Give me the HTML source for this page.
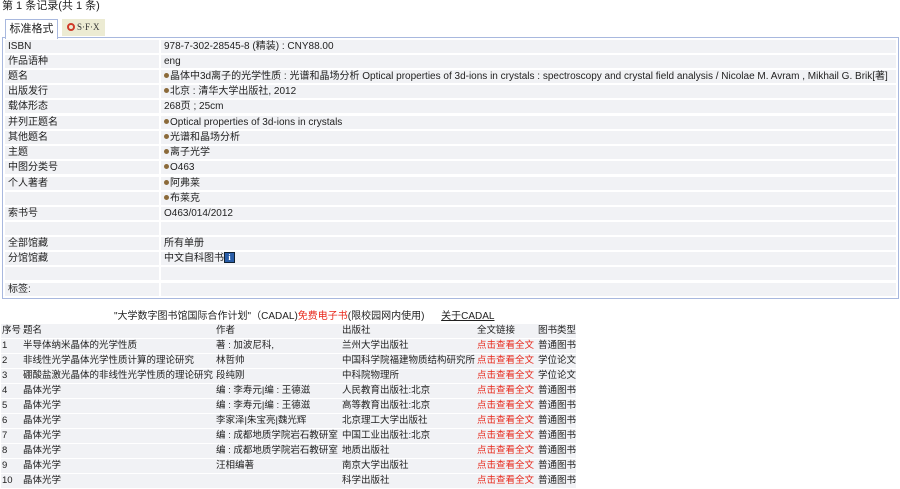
<!DOCTYPE html>
<html><head><meta charset="utf-8"><style>
body{margin:0;background:#fff;font-family:"Liberation Sans","Noto Sans CJK SC",sans-serif;font-size:10px;color:#222;width:900px;height:482px;overflow:hidden;position:relative}
.a{position:absolute;white-space:nowrap}
#box{position:absolute;left:2px;top:37px;width:895px;height:260px;border:1px solid #a8b8de;background:#fff;overflow:hidden}
.row{position:absolute;left:2px;right:2px;height:13px}
.row .l{position:absolute;left:0;width:154px;height:13px;background:#f1f2f5}
.row .v{position:absolute;left:156px;right:0;height:13px;background:#f1f2f5}
.row span{position:absolute;top:0;line-height:14px;white-space:nowrap}
.dot{display:inline-block;width:5px;height:5px;border-radius:50%;background:#8b6a3a;margin:0 1px 1px 0;vertical-align:middle}
table{position:absolute;left:1px;top:323px;border-collapse:separate;border-spacing:0 1px;font-size:9.5px;table-layout:fixed;width:575px}
td{background:#f1f2f5;height:14px;padding:0 0 0 1px;line-height:14px;white-space:nowrap;overflow:hidden}
.r{color:#e8291c}
</style></head><body>
<div class="a" style="left:2px;top:0;font-size:11px;line-height:13px">第 1 条记录(共 1 条)</div>
<div class="a" style="left:5px;top:19px;width:51px;height:19px;border:1px solid #a8b8de;border-bottom:none;background:#fff;z-index:2;text-align:center;line-height:19px;font-size:11px">标准格式</div>
<div class="a" style="left:62px;top:19px;width:43px;height:17px;background:#ecebd3;font-family:'Liberation Serif',serif;font-size:9px;line-height:17px;color:#333"><span style="display:inline-block;width:8px;height:8px;border-radius:50%;border:2px solid #d03a2a;box-sizing:border-box;margin:0 2px 0 5px;vertical-align:-1px"></span>S·F·X</div>
<div id="box">
<div class="row" style="top:2px"><div class="l"></div><div class="v"></div><span style="left:3px">ISBN</span><span style="left:159px">978-7-302-28545-8 (精装) : CNY88.00</span></div>
<div class="row" style="top:17px"><div class="l"></div><div class="v"></div><span style="left:3px">作品语种</span><span style="left:159px">eng</span></div>
<div class="row" style="top:32px"><div class="l"></div><div class="v"></div><span style="left:3px">题名</span><span style="left:159px"><i class="dot"></i>晶体中3d离子的光学性质 : 光谱和晶场分析 Optical properties of 3d-ions in crystals : spectroscopy and crystal field analysis / Nicolae M. Avram , Mikhail G. Brik[著]</span></div>
<div class="row" style="top:47px"><div class="l"></div><div class="v"></div><span style="left:3px">出版发行</span><span style="left:159px"><i class="dot"></i>北京 : 清华大学出版社, 2012</span></div>
<div class="row" style="top:62px"><div class="l"></div><div class="v"></div><span style="left:3px">载体形态</span><span style="left:159px">268页 ; 25cm</span></div>
<div class="row" style="top:78px"><div class="l"></div><div class="v"></div><span style="left:3px">并列正题名</span><span style="left:159px"><i class="dot"></i>Optical properties of 3d-ions in crystals</span></div>
<div class="row" style="top:93px"><div class="l"></div><div class="v"></div><span style="left:3px">其他题名</span><span style="left:159px"><i class="dot"></i>光谱和晶场分析</span></div>
<div class="row" style="top:108px"><div class="l"></div><div class="v"></div><span style="left:3px">主题</span><span style="left:159px"><i class="dot"></i>离子光学</span></div>
<div class="row" style="top:123px"><div class="l"></div><div class="v"></div><span style="left:3px">中图分类号</span><span style="left:159px"><i class="dot"></i>O463</span></div>
<div class="row" style="top:139px"><div class="l"></div><div class="v"></div><span style="left:3px">个人著者</span><span style="left:159px"><i class="dot"></i>阿弗莱</span></div>
<div class="row" style="top:154px"><div class="l"></div><div class="v"></div><span style="left:159px"><i class="dot"></i>布莱克</span></div>
<div class="row" style="top:169px"><div class="l"></div><div class="v"></div><span style="left:3px">索书号</span><span style="left:159px">O463/014/2012</span></div>
<div class="row" style="top:184px"><div class="l"></div><div class="v"></div></div>
<div class="row" style="top:199px"><div class="l"></div><div class="v"></div><span style="left:3px">全部馆藏</span><span style="left:159px">所有单册</span></div>
<div class="row" style="top:214px"><div class="l"></div><div class="v"></div><span style="left:3px">分馆馆藏</span><span style="left:159px">中文自科图书<b style="display:inline-block;width:9px;height:9px;background:#2a5ea8;color:#fff;font-size:8px;line-height:9px;text-align:center;font-family:'Liberation Serif',serif;border:1px solid #123;vertical-align:1px">i</b></span></div>
<div class="row" style="top:229px"><div class="l"></div><div class="v"></div></div>
<div class="row" style="top:245px"><div class="l"></div><div class="v"></div><span style="left:3px">标签:</span></div>
</div>
<div class="a" style="left:114px;top:310px;line-height:13px">"大学数字图书馆国际合作计划"（CADAL)<span class="r">免费电子书</span>(限校园网内使用)&nbsp;&nbsp;&nbsp;&nbsp;&nbsp;&nbsp;<u>关于CADAL</u></div>
<table>
<colgroup><col style="width:21px"><col style="width:193px"><col style="width:126px"><col style="width:135px"><col style="width:61px"><col style="width:39px"></colgroup>
<tr><td>序号</td><td>题名</td><td>作者</td><td>出版社</td><td>全文链接</td><td>图书类型</td></tr>
<tr><td>1</td><td>半导体纳米晶体的光学性质</td><td>著 : 加波尼科,</td><td>兰州大学出版社</td><td class="r">点击查看全文</td><td>普通图书</td></tr>
<tr><td>2</td><td>非线性光学晶体光学性质计算的理论研究</td><td>林哲帅</td><td>中国科学院福建物质结构研究所</td><td class="r">点击查看全文</td><td>学位论文</td></tr>
<tr><td>3</td><td>硼酸盐激光晶体的非线性光学性质的理论研究</td><td>段纯刚</td><td>中科院物理所</td><td class="r">点击查看全文</td><td>学位论文</td></tr>
<tr><td>4</td><td>晶体光学</td><td>编 : 李寿元|编 : 王德滋</td><td>人民教育出版社:北京</td><td class="r">点击查看全文</td><td>普通图书</td></tr>
<tr><td>5</td><td>晶体光学</td><td>编 : 李寿元|编 : 王德滋</td><td>高等教育出版社:北京</td><td class="r">点击查看全文</td><td>普通图书</td></tr>
<tr><td>6</td><td>晶体光学</td><td>李家泽|朱宝亮|魏光辉</td><td>北京理工大学出版社</td><td class="r">点击查看全文</td><td>普通图书</td></tr>
<tr><td>7</td><td>晶体光学</td><td>编 : 成都地质学院岩石教研室</td><td>中国工业出版社:北京</td><td class="r">点击查看全文</td><td>普通图书</td></tr>
<tr><td>8</td><td>晶体光学</td><td>编 : 成都地质学院岩石教研室</td><td>地质出版社</td><td class="r">点击查看全文</td><td>普通图书</td></tr>
<tr><td>9</td><td>晶体光学</td><td>汪相编著</td><td>南京大学出版社</td><td class="r">点击查看全文</td><td>普通图书</td></tr>
<tr><td>10</td><td>晶体光学</td><td></td><td>科学出版社</td><td class="r">点击查看全文</td><td>普通图书</td></tr>
</table>
</body></html>
